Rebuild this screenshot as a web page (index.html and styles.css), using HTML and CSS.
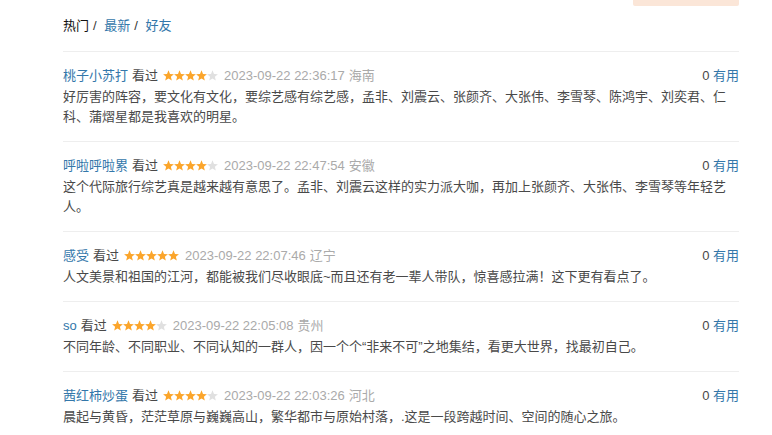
FILE: index.html
```html
<!DOCTYPE html>
<html>
<head>
  <meta charset="utf-8">
  <title>短评</title>
  <link rel="stylesheet" href="styles.css">
</head>
<body>
  <div class="wrap">
    <div class="top-strip"><div class="strip-block"></div></div>

    <div class="tabs">
      <span class="tab on">热门</span><span class="sep">/</span>
      <a class="tab" href="#">最新</a><span class="sep">/</span>
      <a class="tab" href="#">好友</a>
    </div>

    <div class="comments">
      <div class="comment">
        <div class="info">
          <div class="meta">
            <a class="user" href="#">桃子小苏打</a>
            <span class="seen">看过</span>
            <svg class="stars" viewBox="0 0 55 11"><use href="#s" x="0" class="full"/><use href="#s" x="11" class="full"/><use href="#s" x="22" class="full"/><use href="#s" x="33" class="full"/><use href="#s" x="44" class="empty"/></svg>
            <span class="time">2023-09-22 22:36:17</span>
            <span class="loc">海南</span>
          </div>
          <div class="votes"><span class="count">0</span> <a href="#">有用</a></div>
        </div>
        <p class="short">好厉害的阵容，要文化有文化，要综艺感有综艺感，孟非、刘震云、张颜齐、大张伟、李雪琴、陈鸿宇、刘奕君、仁科、蒲熠星都是我喜欢的明星。</p>
      </div>

      <div class="comment">
        <div class="info">
          <div class="meta">
            <a class="user" href="#">呼啦呼啦累</a>
            <span class="seen">看过</span>
            <svg class="stars" viewBox="0 0 55 11"><use href="#s" x="0" class="full"/><use href="#s" x="11" class="full"/><use href="#s" x="22" class="full"/><use href="#s" x="33" class="full"/><use href="#s" x="44" class="empty"/></svg>
            <span class="time">2023-09-22 22:47:54</span>
            <span class="loc">安徽</span>
          </div>
          <div class="votes"><span class="count">0</span> <a href="#">有用</a></div>
        </div>
        <p class="short">这个代际旅行综艺真是越来越有意思了。孟非、刘震云这样的实力派大咖，再加上张颜齐、大张伟、李雪琴等年轻艺人。</p>
      </div>

      <div class="comment">
        <div class="info">
          <div class="meta">
            <a class="user" href="#">感受</a>
            <span class="seen">看过</span>
            <svg class="stars" viewBox="0 0 55 11"><use href="#s" x="0" class="full"/><use href="#s" x="11" class="full"/><use href="#s" x="22" class="full"/><use href="#s" x="33" class="full"/><use href="#s" x="44" class="full"/></svg>
            <span class="time">2023-09-22 22:07:46</span>
            <span class="loc">辽宁</span>
          </div>
          <div class="votes"><span class="count">0</span> <a href="#">有用</a></div>
        </div>
        <p class="short">人文美景和祖国的江河，都能被我们尽收眼底~而且还有老一辈人带队，惊喜感拉满！这下更有看点了。</p>
      </div>

      <div class="comment">
        <div class="info">
          <div class="meta">
            <a class="user" href="#">so</a>
            <span class="seen">看过</span>
            <svg class="stars" viewBox="0 0 55 11"><use href="#s" x="0" class="full"/><use href="#s" x="11" class="full"/><use href="#s" x="22" class="full"/><use href="#s" x="33" class="full"/><use href="#s" x="44" class="empty"/></svg>
            <span class="time">2023-09-22 22:05:08</span>
            <span class="loc">贵州</span>
          </div>
          <div class="votes"><span class="count">0</span> <a href="#">有用</a></div>
        </div>
        <p class="short">不同年龄、不同职业、不同认知的一群人，因一个个“非来不可”之地集结，看更大世界，找最初自己。</p>
      </div>

      <div class="comment">
        <div class="info">
          <div class="meta">
            <a class="user" href="#">茜红柿炒蛋</a>
            <span class="seen">看过</span>
            <svg class="stars" viewBox="0 0 55 11"><use href="#s" x="0" class="full"/><use href="#s" x="11" class="full"/><use href="#s" x="22" class="full"/><use href="#s" x="33" class="full"/><use href="#s" x="44" class="empty"/></svg>
            <span class="time">2023-09-22 22:03:26</span>
            <span class="loc">河北</span>
          </div>
          <div class="votes"><span class="count">0</span> <a href="#">有用</a></div>
        </div>
        <p class="short">晨起与黄昏，茫茫草原与巍巍高山，繁华都市与原始村落，.这是一段跨越时间、空间的随心之旅。</p>
      </div>
    </div>
  </div>

  <!-- star shape shared by all ratings -->
  <svg class="defs" width="0" height="0">
    <defs>
      <polygon id="s" points="5.5,0.3 7,3.9 10.9,4.2 7.9,6.8 8.8,10.6 5.5,8.6 2.2,10.6 3.1,6.8 0.1,4.2 4,3.9"/>
    </defs>
  </svg>
</body>
</html>
```

FILE: styles.css
```css
body {
  margin: 0;
  background: #fff;
  font-family: "Liberation Sans", "Noto Sans CJK SC", sans-serif;
  font-size: 13px;
  color: #494949;
}

a {
  color: #37a;
  text-decoration: none;
}

.wrap {
  width: 676px;
  margin-left: 63px;
}

.top-strip {
  display: flex;
  justify-content: flex-end;
}

.strip-block {
  width: 106px;
  height: 6px;
  background: #fbe6d8;
  border-radius: 0 0 2px 2px;
}

.tabs {
  margin-top: 10px;
  padding-bottom: 15px;
  line-height: 20px;
  border-bottom: 1px solid #eee;
}

.tabs .on {
  color: #111;
}

.tabs .sep {
  color: #333;
  margin: 0 4px 0 4px;
}

.comment {
  padding: 12px 0 14px;
  border-bottom: 1px solid #eee;
}

.info {
  display: flex;
  justify-content: space-between;
  line-height: 23px;
}

.meta {
  display: flex;
  align-items: center;
  gap: 4px;
}

.seen {
  color: #494949;
}

.stars {
  width: 55px;
  height: 11px;
  margin: 0 2px 0 1px;
}

.stars .full {
  fill: #fba52b;
}

.stars .empty {
  fill: #e0e0e0;
}

.time,
.loc {
  color: #aaa;
}

.votes .count {
  color: #494949;
}

.short {
  margin: 0 2px 0 0;
  line-height: 20px;
  color: #494949;
}

.defs {
  position: absolute;
}
```
